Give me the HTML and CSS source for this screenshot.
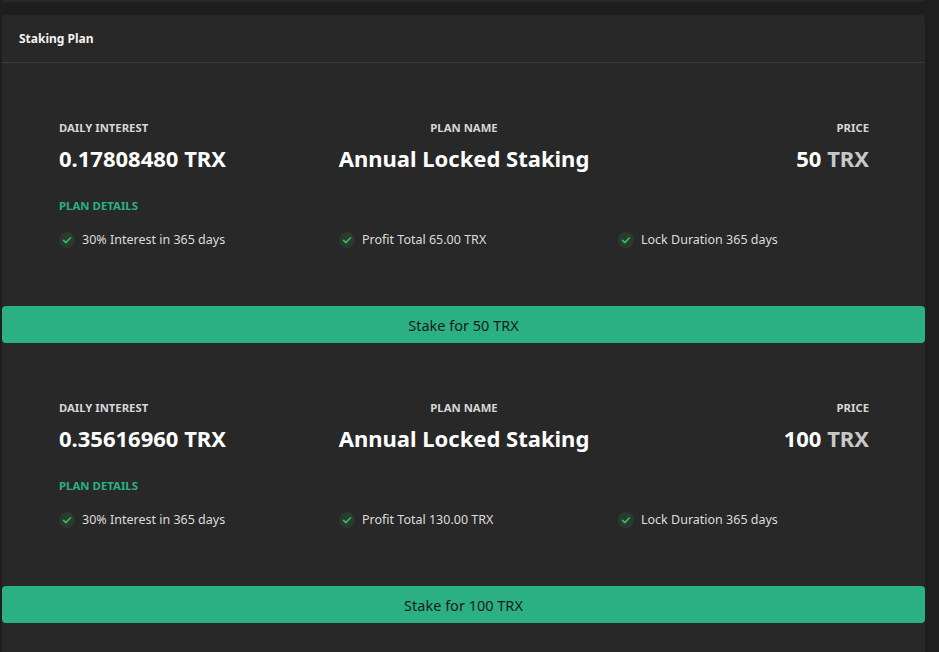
FILE: index.html
```html
<!DOCTYPE html>
<html lang="en">
<head>
  <meta charset="UTF-8" />
  <meta name="viewport" content="width=device-width, initial-scale=1.0"/>
  <title>Staking Plan</title>
  <link rel="stylesheet" href="styles.css">
</head>
<body>

  <div class="page">
    <div class="prev-card"></div>

    <div class="card">
      <div class="card-header">Staking Plan</div>

      <div class="plan">
        <div class="plan-top">
          <div class="stat">
            <div class="label">Daily Interest</div>
            <div class="value">0.17808480 TRX</div>
          </div>
          <div class="stat center">
            <div class="label">Plan Name</div>
            <div class="value">Annual Locked Staking</div>
          </div>
          <div class="stat right">
            <div class="label">Price</div>
            <div class="value">50 <span class="unit">TRX</span></div>
          </div>
        </div>
        <div class="details-title">Plan Details</div>
        <ul class="details">
          <li><span class="check"><svg viewBox="0 0 16 16"><path d="M4.5 8.3l2.3 2.3 4.7-4.8"/></svg></span>30% Interest in 365 days</li>
          <li><span class="check"><svg viewBox="0 0 16 16"><path d="M4.5 8.3l2.3 2.3 4.7-4.8"/></svg></span>Profit Total 65.00 TRX</li>
          <li><span class="check"><svg viewBox="0 0 16 16"><path d="M4.5 8.3l2.3 2.3 4.7-4.8"/></svg></span>Lock Duration 365 days</li>
        </ul>
      </div>
      <button class="stake-btn">Stake for 50 TRX</button>

      <div class="plan">
        <div class="plan-top">
          <div class="stat">
            <div class="label">Daily Interest</div>
            <div class="value">0.35616960 TRX</div>
          </div>
          <div class="stat center">
            <div class="label">Plan Name</div>
            <div class="value">Annual Locked Staking</div>
          </div>
          <div class="stat right">
            <div class="label">Price</div>
            <div class="value">100 <span class="unit">TRX</span></div>
          </div>
        </div>
        <div class="details-title">Plan Details</div>
        <ul class="details">
          <li><span class="check"><svg viewBox="0 0 16 16"><path d="M4.5 8.3l2.3 2.3 4.7-4.8"/></svg></span>30% Interest in 365 days</li>
          <li><span class="check"><svg viewBox="0 0 16 16"><path d="M4.5 8.3l2.3 2.3 4.7-4.8"/></svg></span>Profit Total 130.00 TRX</li>
          <li><span class="check"><svg viewBox="0 0 16 16"><path d="M4.5 8.3l2.3 2.3 4.7-4.8"/></svg></span>Lock Duration 365 days</li>
        </ul>
      </div>
      <button class="stake-btn">Stake for 100 TRX</button>

      <div class="plan-tail"></div>
    </div>
  </div>

</body>
</html>
```

FILE: styles.css
```css
body {
  margin: 0;
  background: #1e1e1e;
  font-family: "Noto Sans", "Open Sans", sans-serif;
  color: #e6e6e6;
  overflow: hidden;
}
.page {
  padding: 0 14px 0 2px;
}
.prev-card {
  height: 2px;
  margin-right: 1px;
  background: #282828;
  border-radius: 0 0 4px 4px;
  margin-bottom: 13px;
}
.card {
  background: #282828;
  border-radius: 4px;
}
.card-header {
  height: 47px;
  line-height: 47px;
  padding-left: 17px;
  font-size: 12px;
  font-weight: 700;
  color: #f2f2f2;
  border-bottom: 1px solid #3b3b3b;
}
.plan {
  padding: 57px 56px 0 57px;
  height: 186px;
}
.plan-top {
  display: grid;
  grid-template-columns: repeat(3, 1fr);
}
.stat.center {
  text-align: center;
}
.stat.right {
  text-align: right;
}
.label {
  font-size: 11.3px;
  font-weight: 700;
  text-transform: uppercase;
  color: #d6d6d6;
  line-height: 16px;
}
.value {
  margin-top: 7px;
  font-size: 22px;
  font-weight: 700;
  color: #ffffff;
  line-height: 30px;
}
.unit {
  color: #c9c9c9;
}
.details-title {
  margin-top: 25px;
  font-size: 11.4px;
  font-weight: 700;
  text-transform: uppercase;
  color: #2bb084;
  line-height: 16px;
}
.details {
  list-style: none;
  margin: 18px 0 0;
  padding: 0;
  display: grid;
  grid-template-columns: 280px 279px 280px;
}
.details li {
  display: flex;
  align-items: center;
  gap: 7px;
  font-size: 12.5px;
  color: #dcdcdc;
  line-height: 16px;
}
.check {
  width: 16px;
  height: 16px;
  border-radius: 50%;
  background: #2b3a2f;
  display: flex;
  align-items: center;
  justify-content: center;
  flex-shrink: 0;
}
.check svg {
  width: 16px;
  height: 16px;
  fill: none;
  stroke: #2fc25b;
  stroke-width: 1.6;
  stroke-linecap: round;
  stroke-linejoin: round;
}
.stake-btn {
  display: block;
  width: 100%;
  height: 37px;
  border: none;
  border-radius: 4px;
  background: #2bb084;
  color: #1b1b1b;
  font-family: inherit;
  font-size: 14.5px;
  cursor: pointer;
}
.plan-tail {
  height: 40px;
}
```
